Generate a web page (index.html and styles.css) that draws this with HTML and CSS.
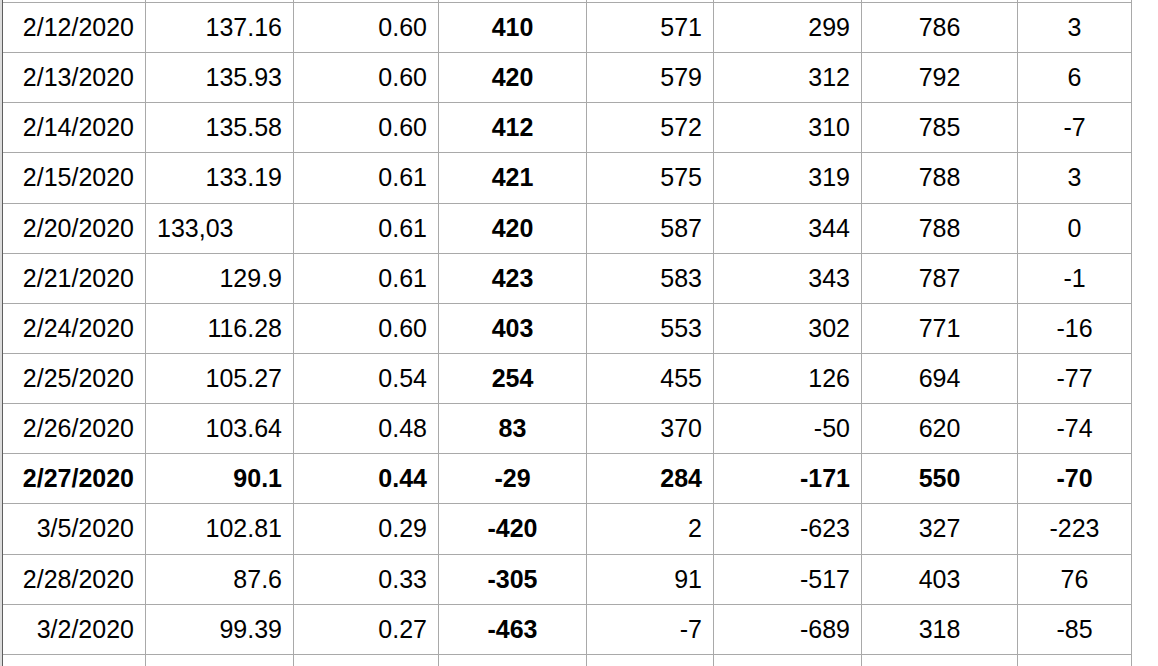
FILE: index.html
```html
<!DOCTYPE html>
<html>
<head>
<meta charset="utf-8">
<link rel="stylesheet" href="styles.css">
</head>
<body>
<div class="sheet">
  <div class="gutter"></div>
  <div class="grid">
    <div class="c edge"></div><div class="c edge"></div><div class="c edge"></div><div class="c edge"></div><div class="c edge"></div><div class="c edge"></div><div class="c edge"></div><div class="c edge"></div>

    <div class="c r">2/12/2020</div><div class="c r">137.16</div><div class="c r">0.60</div><div class="c m b">410</div><div class="c r">571</div><div class="c r">299</div><div class="c m">786</div><div class="c m">3</div>
    <div class="c r">2/13/2020</div><div class="c r">135.93</div><div class="c r">0.60</div><div class="c m b">420</div><div class="c r">579</div><div class="c r">312</div><div class="c m">792</div><div class="c m">6</div>
    <div class="c r">2/14/2020</div><div class="c r">135.58</div><div class="c r">0.60</div><div class="c m b">412</div><div class="c r">572</div><div class="c r">310</div><div class="c m">785</div><div class="c m">-7</div>
    <div class="c r">2/15/2020</div><div class="c r">133.19</div><div class="c r">0.61</div><div class="c m b">421</div><div class="c r">575</div><div class="c r">319</div><div class="c m">788</div><div class="c m">3</div>
    <div class="c r">2/20/2020</div><div class="c l">133,03</div><div class="c r">0.61</div><div class="c m b">420</div><div class="c r">587</div><div class="c r">344</div><div class="c m">788</div><div class="c m">0</div>
    <div class="c r">2/21/2020</div><div class="c r">129.9</div><div class="c r">0.61</div><div class="c m b">423</div><div class="c r">583</div><div class="c r">343</div><div class="c m">787</div><div class="c m">-1</div>
    <div class="c r">2/24/2020</div><div class="c r">116.28</div><div class="c r">0.60</div><div class="c m b">403</div><div class="c r">553</div><div class="c r">302</div><div class="c m">771</div><div class="c m">-16</div>
    <div class="c r">2/25/2020</div><div class="c r">105.27</div><div class="c r">0.54</div><div class="c m b">254</div><div class="c r">455</div><div class="c r">126</div><div class="c m">694</div><div class="c m">-77</div>
    <div class="c r">2/26/2020</div><div class="c r">103.64</div><div class="c r">0.48</div><div class="c m b">83</div><div class="c r">370</div><div class="c r">-50</div><div class="c m">620</div><div class="c m">-74</div>
    <div class="c r b">2/27/2020</div><div class="c r b">90.1</div><div class="c r b">0.44</div><div class="c m b">-29</div><div class="c r b">284</div><div class="c r b">-171</div><div class="c m b">550</div><div class="c m b">-70</div>
    <div class="c r">3/5/2020</div><div class="c r">102.81</div><div class="c r">0.29</div><div class="c m b">-420</div><div class="c r">2</div><div class="c r">-623</div><div class="c m">327</div><div class="c m">-223</div>
    <div class="c r">2/28/2020</div><div class="c r">87.6</div><div class="c r">0.33</div><div class="c m b">-305</div><div class="c r">91</div><div class="c r">-517</div><div class="c m">403</div><div class="c m">76</div>
    <div class="c r">3/2/2020</div><div class="c r">99.39</div><div class="c r">0.27</div><div class="c m b">-463</div><div class="c r">-7</div><div class="c r">-689</div><div class="c m">318</div><div class="c m">-85</div>

    <div class="c tail"></div><div class="c tail"></div><div class="c tail"></div><div class="c tail"></div><div class="c tail"></div><div class="c tail"></div><div class="c tail"></div><div class="c tail"></div>
  </div>
</div>
</body>
</html>
```

FILE: styles.css
```css
html, body {
  margin: 0;
  padding: 0;
  background: #fff;
  overflow: hidden;
}
body {
  width: 1158px;
  height: 666px;
  font-family: "Liberation Sans", Arial, Helvetica, sans-serif;
  font-size: 25px;
  color: #000;
}
.sheet {
  display: flex;
  height: 666px;
  overflow: hidden;
}
.gutter {
  width: 2px;
  background: #dcdcdc;
  border-right: 1px solid #5e5e5e;
  flex: none;
}
.grid {
  display: grid;
  grid-template-columns: 143px 148px 145px 148px 127px 148px 156px 114px;
  grid-template-rows: 3px repeat(13, 50.15px) 20px;
  align-content: start;
}
.c {
  box-sizing: border-box;
  border-right: 1px solid #a9a9a9;
  border-bottom: 1px solid #a9a9a9;
  display: flex;
  align-items: center;
  padding: 0 11px;
  white-space: nowrap;
  line-height: 1;
}
.edge {
  padding: 0;
}
.tail {
  border-bottom: none;
}
.r { justify-content: flex-end; }
.l { justify-content: flex-start; }
.m { justify-content: center; }
.b { font-weight: bold; }
```
